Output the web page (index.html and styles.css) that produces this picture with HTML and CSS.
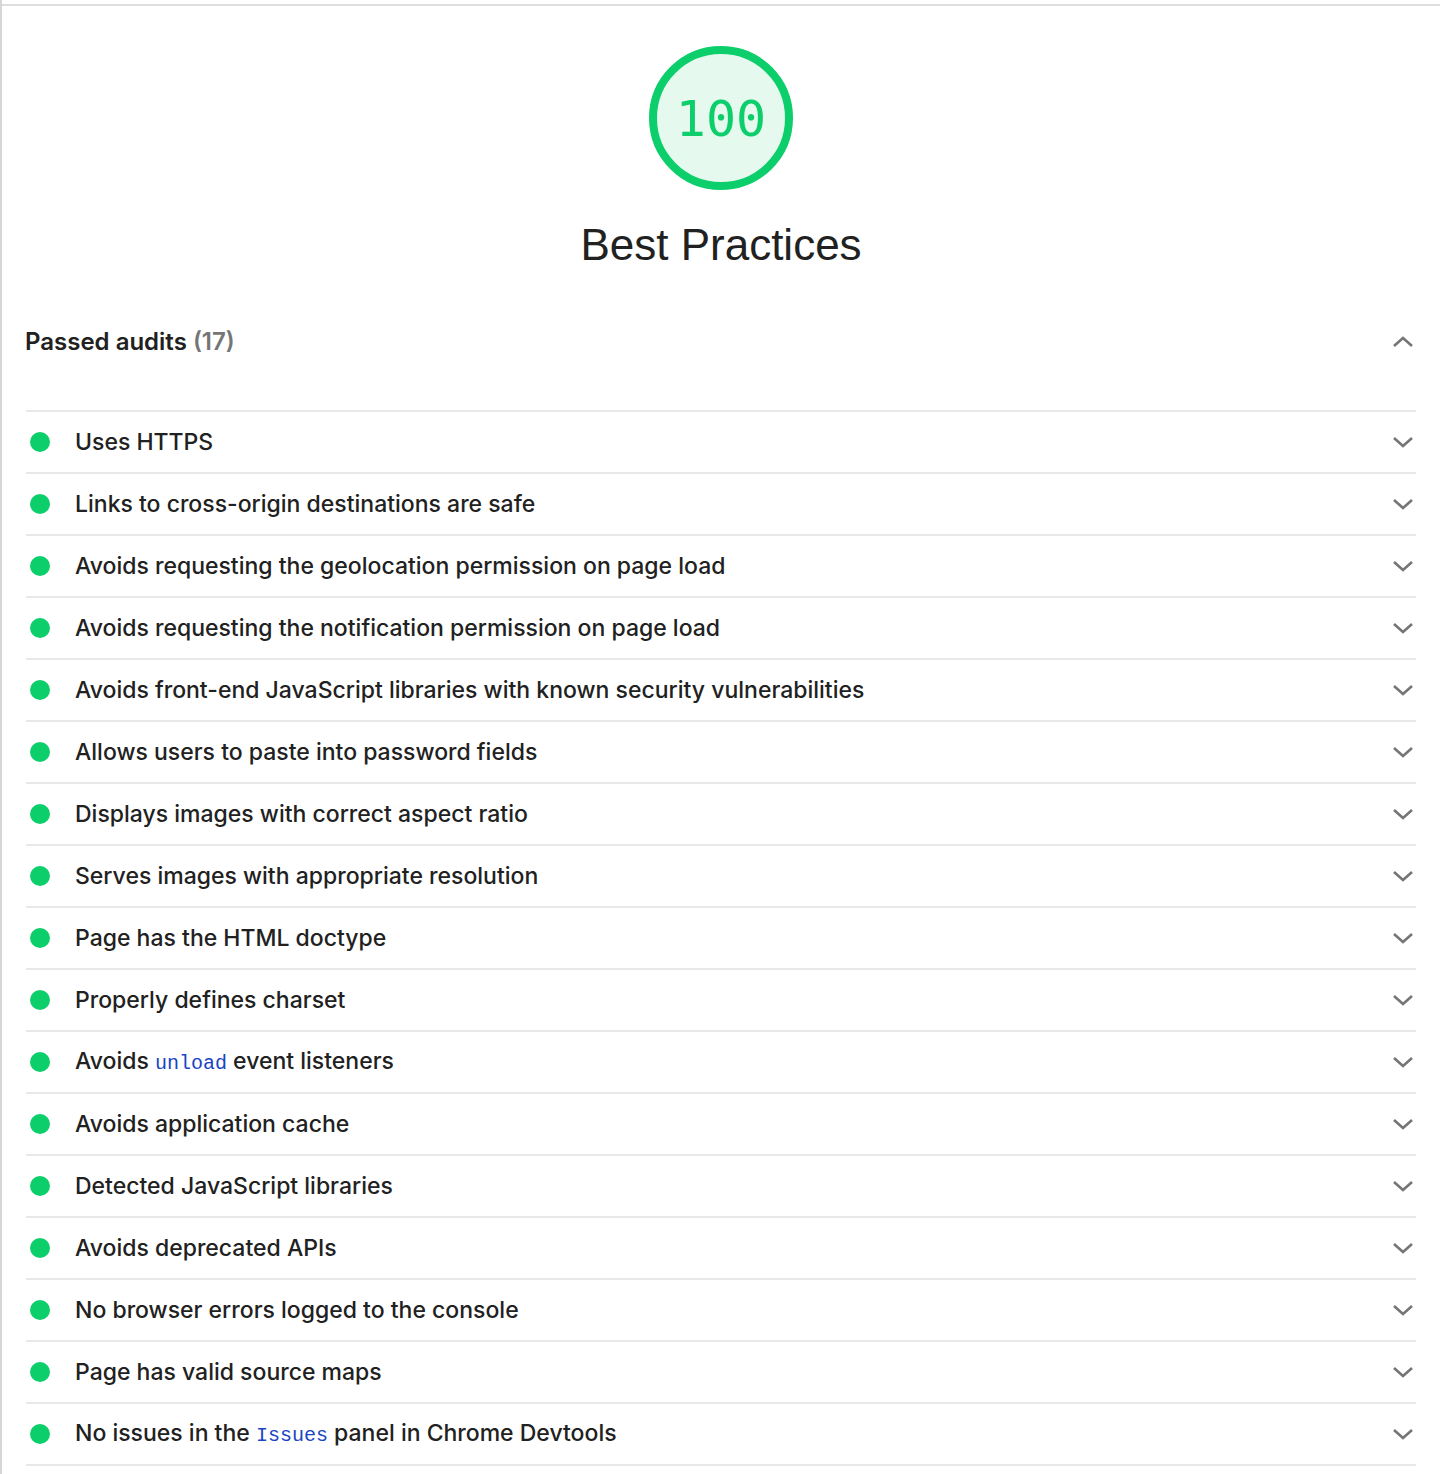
FILE: index.html
```html
<!DOCTYPE html>
<html lang="en">
<head>
<meta charset="utf-8">
<title>Best Practices</title>
<link rel="stylesheet" href="styles.css">
</head>
<body>
<div class="frame">
  <div class="panel">
    <div class="gauge-wrap">
      <div class="gauge"><span class="gauge-num">100</span></div>
      <h1 class="title">Best Practices</h1>
    </div>

    <div class="group-head">
      <div class="group-title">Passed audits <span class="count">(17)</span></div>
      <svg class="chev" width="22" height="14" viewBox="0 0 22 14"><path d="M2 11 L11 3 L20 11" fill="none" stroke="#757575" stroke-width="2.6"/></svg>
    </div>

    <ul class="audits">
      <li class="audit"><span class="dot"></span><span class="label">Uses HTTPS</span><svg class="chev" width="22" height="14" viewBox="0 0 22 14"><path d="M2 3 L11 11 L20 3" fill="none" stroke="#757575" stroke-width="2.6"/></svg></li>
      <li class="audit"><span class="dot"></span><span class="label">Links to cross-origin destinations are safe</span><svg class="chev" width="22" height="14" viewBox="0 0 22 14"><path d="M2 3 L11 11 L20 3" fill="none" stroke="#757575" stroke-width="2.6"/></svg></li>
      <li class="audit"><span class="dot"></span><span class="label">Avoids requesting the geolocation permission on page load</span><svg class="chev" width="22" height="14" viewBox="0 0 22 14"><path d="M2 3 L11 11 L20 3" fill="none" stroke="#757575" stroke-width="2.6"/></svg></li>
      <li class="audit"><span class="dot"></span><span class="label">Avoids requesting the notification permission on page load</span><svg class="chev" width="22" height="14" viewBox="0 0 22 14"><path d="M2 3 L11 11 L20 3" fill="none" stroke="#757575" stroke-width="2.6"/></svg></li>
      <li class="audit"><span class="dot"></span><span class="label">Avoids front-end JavaScript libraries with known security vulnerabilities</span><svg class="chev" width="22" height="14" viewBox="0 0 22 14"><path d="M2 3 L11 11 L20 3" fill="none" stroke="#757575" stroke-width="2.6"/></svg></li>
      <li class="audit"><span class="dot"></span><span class="label">Allows users to paste into password fields</span><svg class="chev" width="22" height="14" viewBox="0 0 22 14"><path d="M2 3 L11 11 L20 3" fill="none" stroke="#757575" stroke-width="2.6"/></svg></li>
      <li class="audit"><span class="dot"></span><span class="label">Displays images with correct aspect ratio</span><svg class="chev" width="22" height="14" viewBox="0 0 22 14"><path d="M2 3 L11 11 L20 3" fill="none" stroke="#757575" stroke-width="2.6"/></svg></li>
      <li class="audit"><span class="dot"></span><span class="label">Serves images with appropriate resolution</span><svg class="chev" width="22" height="14" viewBox="0 0 22 14"><path d="M2 3 L11 11 L20 3" fill="none" stroke="#757575" stroke-width="2.6"/></svg></li>
      <li class="audit"><span class="dot"></span><span class="label">Page has the HTML doctype</span><svg class="chev" width="22" height="14" viewBox="0 0 22 14"><path d="M2 3 L11 11 L20 3" fill="none" stroke="#757575" stroke-width="2.6"/></svg></li>
      <li class="audit"><span class="dot"></span><span class="label">Properly defines charset</span><svg class="chev" width="22" height="14" viewBox="0 0 22 14"><path d="M2 3 L11 11 L20 3" fill="none" stroke="#757575" stroke-width="2.6"/></svg></li>
      <li class="audit"><span class="dot"></span><span class="label">Avoids <code>unload</code> event listeners</span><svg class="chev" width="22" height="14" viewBox="0 0 22 14"><path d="M2 3 L11 11 L20 3" fill="none" stroke="#757575" stroke-width="2.6"/></svg></li>
      <li class="audit"><span class="dot"></span><span class="label">Avoids application cache</span><svg class="chev" width="22" height="14" viewBox="0 0 22 14"><path d="M2 3 L11 11 L20 3" fill="none" stroke="#757575" stroke-width="2.6"/></svg></li>
      <li class="audit"><span class="dot"></span><span class="label">Detected JavaScript libraries</span><svg class="chev" width="22" height="14" viewBox="0 0 22 14"><path d="M2 3 L11 11 L20 3" fill="none" stroke="#757575" stroke-width="2.6"/></svg></li>
      <li class="audit"><span class="dot"></span><span class="label">Avoids deprecated APIs</span><svg class="chev" width="22" height="14" viewBox="0 0 22 14"><path d="M2 3 L11 11 L20 3" fill="none" stroke="#757575" stroke-width="2.6"/></svg></li>
      <li class="audit"><span class="dot"></span><span class="label">No browser errors logged to the console</span><svg class="chev" width="22" height="14" viewBox="0 0 22 14"><path d="M2 3 L11 11 L20 3" fill="none" stroke="#757575" stroke-width="2.6"/></svg></li>
      <li class="audit"><span class="dot"></span><span class="label">Page has valid source maps</span><svg class="chev" width="22" height="14" viewBox="0 0 22 14"><path d="M2 3 L11 11 L20 3" fill="none" stroke="#757575" stroke-width="2.6"/></svg></li>
      <li class="audit"><span class="dot"></span><span class="label">No issues in the <code>Issues</code> panel in Chrome Devtools</span><svg class="chev" width="22" height="14" viewBox="0 0 22 14"><path d="M2 3 L11 11 L20 3" fill="none" stroke="#757575" stroke-width="2.6"/></svg></li>
    </ul>
  </div>
</div>
</body>
</html>
```

FILE: styles.css
```css
html, body {
  margin: 0;
  padding: 0;
  background: #ffffff;
}

body {
  font-family: "Liberation Sans", Arial, sans-serif;
  color: #212121;
}

.frame {
  border-left: 2px solid #d6d6d6;
  min-height: 1474px;
  box-sizing: border-box;
  padding-top: 4px;
}

.panel {
  border-top: 2px solid #dedede;
  padding: 0 24px 0 24px;
}

.gauge-wrap {
  display: flex;
  flex-direction: column;
  align-items: center;
  padding-top: 40px;
}

.gauge {
  width: 144px;
  height: 144px;
  box-sizing: border-box;
  border: 8px solid #0cce6b;
  border-radius: 50%;
  background: #e6f9ee;
  display: flex;
  align-items: center;
  justify-content: center;
}

.gauge-num {
  font-family: "DejaVu Sans Mono", monospace;
  font-size: 50px;
  color: #0cce6b;
  line-height: 1;
  margin-top: 2px;
}

.title {
  margin: 29px 0 0 0;
  font-weight: normal;
  font-size: 44px;
  line-height: 52px;
  color: #212121;
}

.group-head {
  display: flex;
  align-items: center;
  justify-content: space-between;
  margin-top: 56px;
  height: 30px;
  padding-right: 2px;
}

.group-title {
  font-family: Inter, "Liberation Sans", sans-serif;
  font-size: 24px;
  font-weight: 600;
  line-height: 30px;
  margin-left: -1px;
}

.count {
  color: #757575;
}

.audits {
  list-style: none;
  margin: 53px 0 0 0;
  padding: 0;
}

.audit {
  display: flex;
  align-items: center;
  height: 60px;
  border-top: 2px solid #e8e8e8;
  padding-right: 2px;
}

.audit:last-child {
  border-bottom: 2px solid #e8e8e8;
}

.dot {
  width: 20px;
  height: 20px;
  border-radius: 50%;
  background: #0cce6b;
  margin-left: 4px;
  flex: none;
}

.label {
  font-family: Inter, "Liberation Sans", sans-serif;
  margin-left: 25px;
  font-size: 23px;
  font-weight: 450;
  line-height: 30px;
  flex: 1;
}

code {
  font-family: "Liberation Mono", "Courier New", monospace;
  font-size: 20px;
  font-weight: 400;
  color: #1a45c4;
}

.chev {
  flex: none;
  display: block;
}
```
